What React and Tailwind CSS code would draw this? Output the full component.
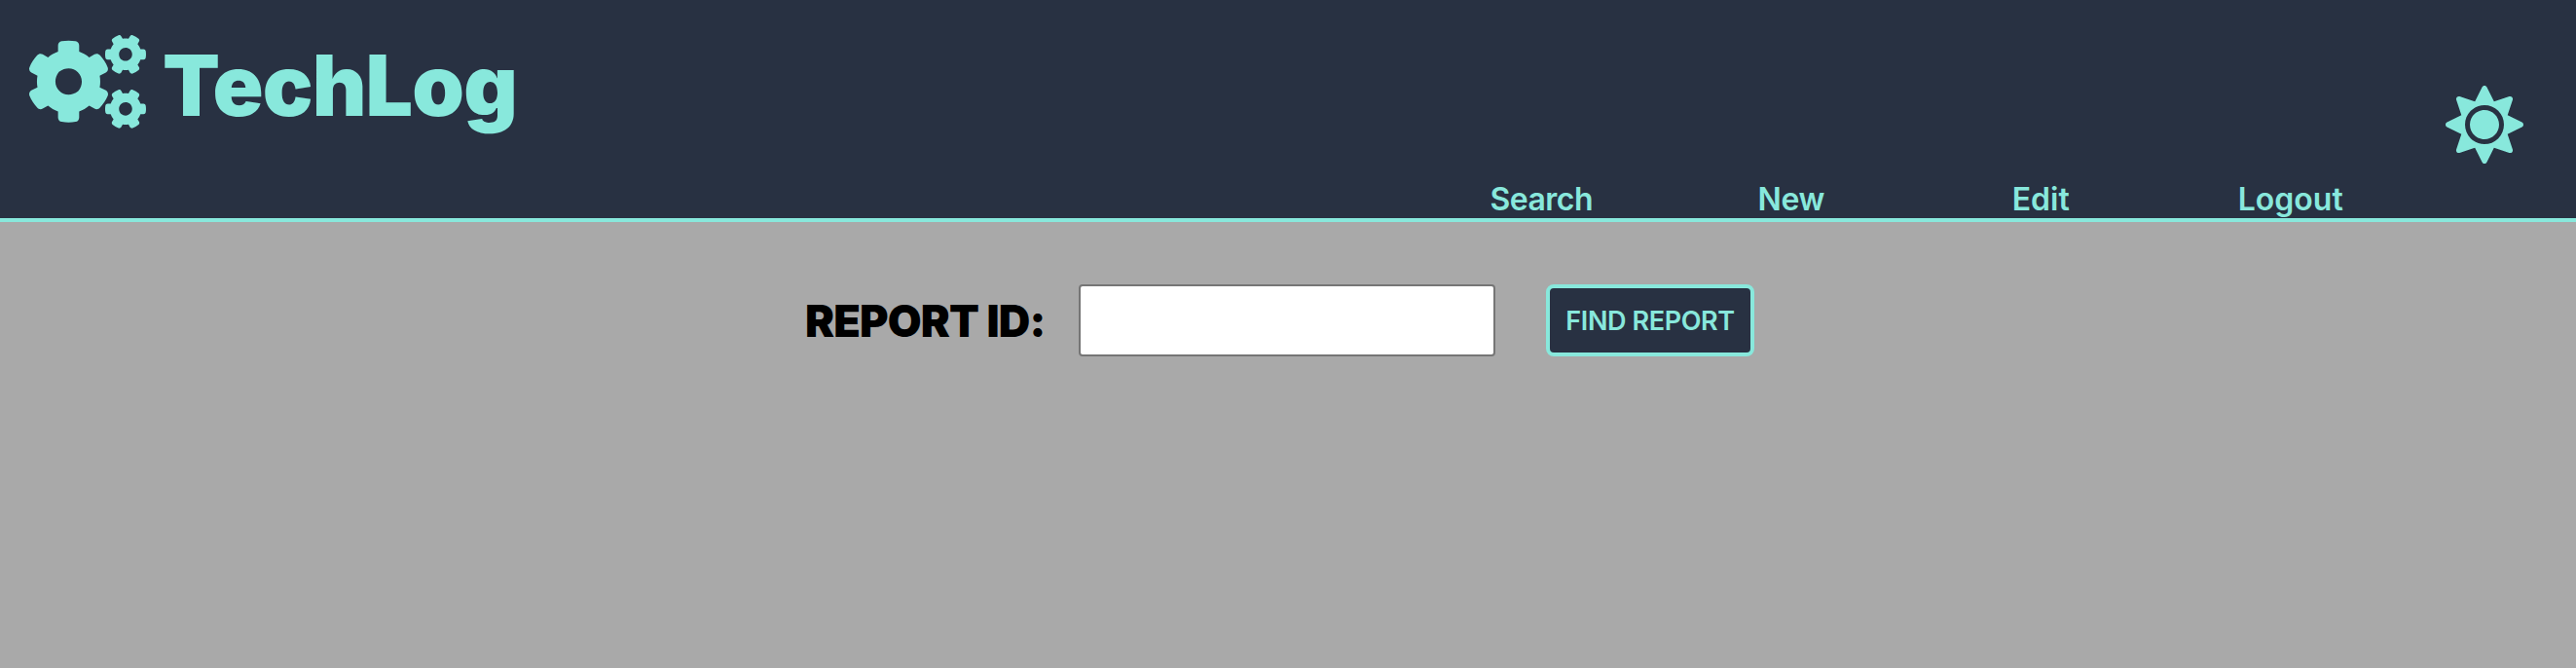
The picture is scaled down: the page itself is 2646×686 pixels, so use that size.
import { FaCogs, FaSun } from "react-icons/fa";

const links = [
  { label: "Search", spacing: "tracking-[-0.5px]" },
  { label: "New", spacing: "tracking-[-0.4px]" },
  { label: "Edit", spacing: "tracking-[0px]" },
  { label: "Logout", spacing: "tracking-[0px]" },
];

function Header() {
  return (
    <header className="flex h-[228px] border-b-4 border-[#88e8dc] bg-[#283142] text-[#88e8dc]">
      <div className="flex h-[168px] w-[1455px] items-start pl-[30px] pt-[36px]">
        <FaCogs className="h-[96px] w-[120px]" />
        <h1 className="ml-[17px] mt-[-12px] text-[86px] font-black leading-[128px] tracking-[-0.9px]">TechLog</h1>
      </div>
      <nav className="grid w-[1026px] grid-cols-4 items-end">
        {links.map(({ label, spacing }) => (
          <a key={label} href="#" className={"text-center text-[32px] font-semibold leading-[38px] " + spacing}>
            {label}
          </a>
        ))}
      </nav>
      <button type="button" aria-label="Toggle theme" className="ml-[31px] mt-[88px] size-[80px]">
        <FaSun className="size-[80px]" />
      </button>
    </header>
  );
}

export default function App() {
  return (
    <div className="min-h-screen bg-[#a9a9a9] font-['Inter',sans-serif]">
      <Header />
      <main>
        <form className="flex items-center pl-[827px] pt-[64px]">
          <label htmlFor="report" className="h-[74px] w-[281px] whitespace-nowrap pt-px text-[45px] font-black leading-[74px] tracking-[-0.8px] text-black">
            REPORT ID:
          </label>
          <input id="report" className="h-[74px] w-[428px] rounded-[4px] border-2 border-[#767676] bg-white px-3 text-[32px]" />
          <button type="button" className="ml-[52px] h-[74px] w-[214px] whitespace-nowrap rounded-[8px] border-4 border-[#88e8dc] bg-[#283142] pt-[3px] text-[27px] font-semibold tracking-[-0.4px] text-[#88e8dc]">
            FIND REPORT
          </button>
        </form>
      </main>
    </div>
  );
}
